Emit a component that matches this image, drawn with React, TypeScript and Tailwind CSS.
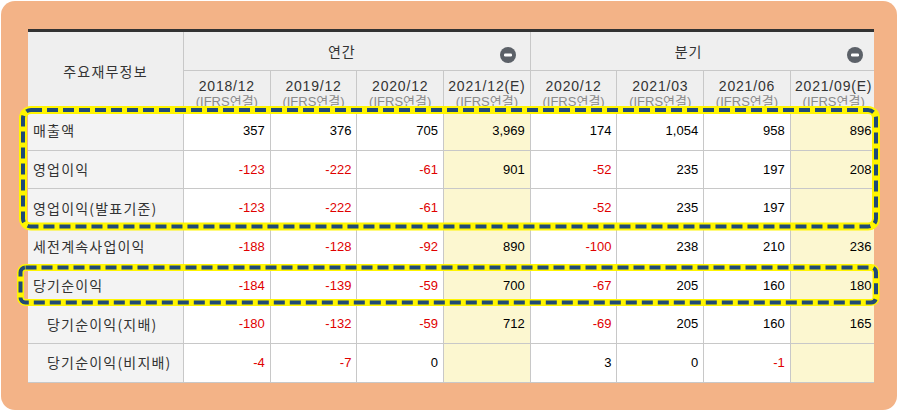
import React from "react";

type Row = { label: string; indent?: boolean; values: string[] };

const rows: Row[] = [
  { label: "매출액", values: ["357", "376", "705", "3,969", "174", "1,054", "958", "896"] },
  { label: "영업이익", values: ["-123", "-222", "-61", "901", "-52", "235", "197", "208"] },
  { label: "영업이익(발표기준)", values: ["-123", "-222", "-61", "", "-52", "235", "197", ""] },
  { label: "세전계속사업이익", values: ["-188", "-128", "-92", "890", "-100", "238", "210", "236"] },
  { label: "당기순이익", values: ["-184", "-139", "-59", "700", "-67", "205", "160", "180"] },
  { label: "당기순이익(지배)", indent: true, values: ["-180", "-132", "-59", "712", "-69", "205", "160", "165"] },
  { label: "당기순이익(비지배)", indent: true, values: ["-4", "-7", "0", "", "3", "0", "-1", ""] },
];

const years = [
  "2018/12",
  "2019/12",
  "2020/12",
  "2021/12(E)",
  "2020/12",
  "2021/03",
  "2021/06",
  "2021/09(E)",
];

const estimate = [false, false, false, true, false, false, false, true];

function MinusIcon() {
  return (
    <svg width="16" height="16" viewBox="0 0 16 16" className="absolute right-[14px] top-[15px]">
      <circle cx="8" cy="8" r="8" fill="#5c6168" />
      <rect x="4" y="6.6" width="8" height="2.8" rx="1.2" fill="#ffffff" />
    </svg>
  );
}

export default function App() {
  return (
    <div className="relative w-[902px] h-[412px] bg-white overflow-hidden">
      <div className="absolute left-[1px] top-[1px] w-[896px] h-[409px] rounded-[14px] bg-[#f3b387] overflow-hidden pl-[27px] pt-[28px]">
        <div className="w-[846px] overflow-hidden bg-white border-t-[3px] border-[#333333]">
          <div className="w-[850px]">
            {/* header */}
            <div className="grid grid-cols-[156px_repeat(8,86.7px)] grid-rows-[39px_41px] bg-[#efefef] text-[#333333]">
              <div className="row-span-2 flex items-center justify-center border-r border-b border-[#c8c8c8] font-['Noto_Sans_CJK_KR',sans-serif] text-[14px] tracking-[1.2px]">
                주요재무정보
              </div>
              <div className="relative col-span-4 flex items-center justify-center pr-[30px] border-r border-b border-[#c8c8c8] font-['Noto_Sans_CJK_KR',sans-serif] text-[14px] tracking-[1px]">
                연간
                <MinusIcon />
              </div>
              <div className="relative col-span-4 flex items-center justify-center pr-[30px] border-r border-b border-[#c8c8c8] font-['Noto_Sans_CJK_KR',sans-serif] text-[14px] tracking-[1px]">
                분기
                <MinusIcon />
              </div>
              {years.map((y, i) => (
                <div
                  key={i}
                  className="flex flex-col items-center pt-[7px] border-r border-b border-[#c8c8c8] overflow-hidden"
                >
                  <span className="font-['Liberation_Sans',sans-serif] text-[14px] leading-[16px] tracking-[0.8px] text-[#333333]">
                    {y}
                  </span>
                  <span className="font-['Liberation_Sans','Noto_Sans_CJK_KR',sans-serif] text-[13px] leading-[15px] text-[#8a8a8a]">
                    (IFRS연결)
                  </span>
                </div>
              ))}
            </div>
            {/* body */}
            {rows.map((r, ri) => (
              <div key={ri} className="grid grid-cols-[156px_repeat(8,86.7px)] h-[38.67px]">
                <div
                  className={`flex items-center border-r border-b border-[#c8c8c8] bg-[#f3f3f3] font-['Noto_Sans_CJK_KR',sans-serif] text-[14px] tracking-[1.2px] text-[#333333] whitespace-nowrap ${
                    r.indent ? "pl-[19px]" : "pl-[5px]"
                  }`}
                >
                  {r.label}
                </div>
                {r.values.map((v, vi) => (
                  <div
                    key={vi}
                    className={`flex items-center justify-end pr-[5px] border-r border-b border-[#c8c8c8] font-['Liberation_Sans',sans-serif] text-[13px] ${
                      estimate[vi] ? "bg-[#fcf7d0]" : "bg-white"
                    } ${v.startsWith("-") ? "text-[#e00000]" : "text-black"}`}
                  >
                    {v}
                  </div>
                ))}
              </div>
            ))}
          </div>
        </div>
      </div>
      {/* highlight boxes */}
      <svg className="absolute left-0 top-0 pointer-events-none" width="902" height="412" viewBox="0 0 902 412">
        <rect x="23" y="110" width="853" height="116.5" rx="8" fill="none" stroke="#fff500" strokeWidth="8" />
        <rect x="23" y="110" width="853" height="116.5" rx="8" fill="none" stroke="#1f4a76" strokeWidth="4" strokeDasharray="11 5" />
        <rect x="20.5" y="267.5" width="855.5" height="35" rx="5" fill="none" stroke="#fff500" strokeWidth="7" />
        <rect x="20.5" y="267.5" width="855.5" height="35" rx="5" fill="none" stroke="#1f4a76" strokeWidth="4" strokeDasharray="11 5" />
      </svg>
    </div>
  );
}
